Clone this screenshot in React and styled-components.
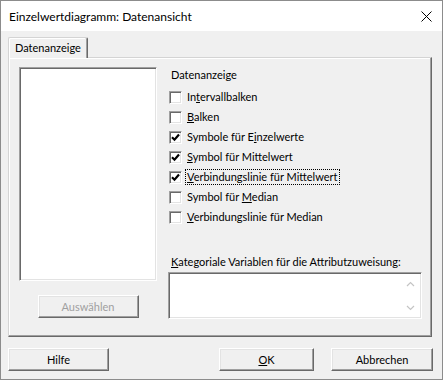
import React from "react";
import styled, { createGlobalStyle } from "styled-components";

const GlobalStyle = createGlobalStyle`
  html, body {
    margin: 0;
    padding: 0;
    background: #ffffff;
  }
  body {
    font-family: Lato, "Noto Sans", sans-serif;
    font-size: 11px;
    color: #000;
  }
`;

const Window = styled.div`
  width: 443px;
  height: 380px;
  box-sizing: border-box;
  border: 1px solid #8c8c8c;
  background: #f0f0f0;
  display: flex;
  flex-direction: column;
`;

const TitleBar = styled.div`
  height: 30px;
  background: #ffffff;
  display: flex;
  align-items: center;
  justify-content: space-between;
  padding: 0 10px 0 8px;
  font-size: 12px;
`;

const Body = styled.div`
  padding: 6px 10px 0 7px;
  display: flex;
  flex-direction: column;
`;

const TabStrip = styled.div`
  display: flex;
  height: 20px;
`;

const Tab = styled.div`
  width: 80px;
  height: 21px;
  box-sizing: border-box;
  border-top: 1px solid #d4d4d4;
  border-left: 1px solid #d4d4d4;
  border-right: 1px solid #696969;
  box-shadow: inset -1px 0 #a0a0a0, inset 1px 1px #ffffff;
  border-radius: 2px 2px 0 0;
  padding: 2px 0 0 6px;
  line-height: 15px;
  background: #f0f0f0;
  position: relative;
  z-index: 1;
`;

const Panel = styled.div`
  height: 280px;
  box-sizing: border-box;
  border-top: 1px solid #d4d4d4;
  border-left: 1px solid #d4d4d4;
  border-right: 1px solid #696969;
  border-bottom: 1px solid #696969;
  box-shadow: inset -1px -1px #a0a0a0, inset 1px 1px #ffffff;
  display: grid;
  grid-template-columns: 138px 254px;
  column-gap: 11px;
  padding: 9px 0 0 10px;
`;

const LeftCol = styled.div`
  display: flex;
  flex-direction: column;
  align-items: center;
`;

const Sunken = styled.div`
  box-sizing: border-box;
  background: #ffffff;
  border-top: 1px solid #a0a0a0;
  border-left: 1px solid #a0a0a0;
  border-right: 1px solid #ffffff;
  border-bottom: 1px solid #ffffff;
  box-shadow: inset 1px 1px #696969, inset -1px -1px #e3e3e3;
`;

const ListBox = styled(Sunken)`
  width: 138px;
  height: 214px;
`;

const Button = styled.div`
  width: ${(p) => p.$w || 101}px;
  height: 23px;
  box-sizing: border-box;
  border-top: 1px solid #ffffff;
  border-left: 1px solid #ffffff;
  border-right: 1px solid #696969;
  border-bottom: 1px solid #696969;
  box-shadow: inset -1px -1px #a0a0a0, inset 1px 1px #e3e3e3;
  display: flex;
  align-items: center;
  justify-content: center;
  color: ${(p) => (p.$disabled ? "#a0a0a0" : "#000")};
  background: #f0f0f0;
`;

const SelectButton = styled(Button)`
  margin-top: 14px;
`;

const RightCol = styled.div`
  display: flex;
  flex-direction: column;
`;

const GroupLabel = styled.div`
  line-height: 16px;
  padding-left: 3px;
  margin-bottom: 4px;
`;

const Row = styled.div`
  height: 20px;
  display: flex;
  align-items: center;
  padding-left: 1px;
`;

const Box = styled(Sunken)`
  width: 13px;
  height: 13px;
  display: flex;
  align-items: center;
  justify-content: center;
  flex-shrink: 0;
`;

const Label = styled.span`
  margin-left: 3px;
  padding: 0 1px;
  line-height: 14px;
  white-space: nowrap;
  border: 1px ${(p) => (p.$focus ? "dotted #000" : "solid transparent")};
`;

const CatLabel = styled.div`
  margin-top: 27px;
  line-height: 16px;
  padding-left: 3px;
  white-space: nowrap;
`;

const TextArea = styled(Sunken)`
  margin-top: 2px;
  height: 47px;
  display: flex;
  justify-content: flex-end;
`;

const ScrollTrack = styled.div`
  width: 17px;
  display: flex;
  flex-direction: column;
  justify-content: space-between;
  align-items: center;
  padding: 6px 0 5px;
  margin: 2px 2px 2px 0;
`;

const Footer = styled.div`
  display: flex;
  padding-top: 11px;
  margin-right: -1px;
`;

const Spacer = styled.div`
  flex: 1;
`;

const Gap = styled.div`
  width: 17px;
`;

const Check = () => (
  <svg width="9" height="9" viewBox="0 0 9 9">
    <path d="M1 4.2 L3.5 6.7 L8 1.5" stroke="#000" strokeWidth="2.2" fill="none" />
  </svg>
);

const Chevron = ({ up }) => (
  <svg width="9" height="6" viewBox="0 0 9 6">
    <path
      d={up ? "M1 5 L4.5 1.5 L8 5" : "M1 1 L4.5 4.5 L8 1"}
      stroke="#c4c4c4"
      strokeWidth="1.2"
      fill="none"
    />
  </svg>
);

const CloseIcon = () => (
  <svg width="11" height="11" viewBox="0 0 11 11">
    <path d="M0.5 0.5 L10.5 10.5 M10.5 0.5 L0.5 10.5" stroke="#000" strokeWidth="1" />
  </svg>
);

const options = [
  { pre: "In", key: "t", post: "ervallbalken", checked: false },
  { pre: "", key: "B", post: "alken", checked: false },
  { pre: "Symbole für E", key: "i", post: "nzelwerte", checked: true },
  { pre: "", key: "S", post: "ymbol für Mittelwert", checked: true },
  { pre: "", key: "V", post: "erbindungslinie für Mittelwert", checked: true, focus: true },
  { pre: "Symbol für ", key: "M", post: "edian", checked: false },
  { pre: "", key: "V", post: "erbindungslinie für Median", checked: false },
];

export default function App() {
  return (
    <>
      <GlobalStyle />
      <Window>
        <TitleBar>
          <span>Einzelwertdiagramm: Datenansicht</span>
          <CloseIcon />
        </TitleBar>
        <Body>
          <TabStrip>
            <Tab>Datenanzeige</Tab>
          </TabStrip>
          <Panel>
            <LeftCol>
              <ListBox />
              <SelectButton $disabled>Auswählen</SelectButton>
            </LeftCol>
            <RightCol>
              <GroupLabel>Datenanzeige</GroupLabel>
              {options.map((o, i) => (
                <Row key={i}>
                  <Box>{o.checked && <Check />}</Box>
                  <Label $focus={o.focus}>
                    {o.pre}
                    <u>{o.key}</u>
                    {o.post}
                  </Label>
                </Row>
              ))}
              <CatLabel>
                <u>K</u>ategoriale Variablen für die Attributzuweisung:
              </CatLabel>
              <TextArea>
                <ScrollTrack>
                  <Chevron up />
                  <Chevron />
                </ScrollTrack>
              </TextArea>
            </RightCol>
          </Panel>
          <Footer>
            <Button>Hilfe</Button>
            <Spacer />
            <Button $w={95}>
              <span>
                <u>O</u>K
              </span>
            </Button>
            <Gap />
            <Button $w={102}>Abbrechen</Button>
          </Footer>
        </Body>
      </Window>
    </>
  );
}
